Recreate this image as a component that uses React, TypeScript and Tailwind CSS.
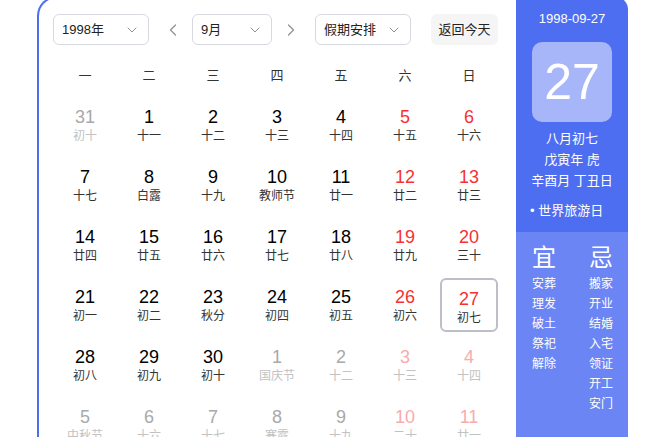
import { ChevronDown, ChevronLeft, ChevronRight } from 'lucide-react'

type Day = { d: number; l: string; out?: boolean }

const rows: Day[][] = [
  [
    { d: 31, l: '初十', out: true },
    { d: 1, l: '十一' },
    { d: 2, l: '十二' },
    { d: 3, l: '十三' },
    { d: 4, l: '十四' },
    { d: 5, l: '十五' },
    { d: 6, l: '十六' },
  ],
  [
    { d: 7, l: '十七' },
    { d: 8, l: '白露' },
    { d: 9, l: '十九' },
    { d: 10, l: '教师节' },
    { d: 11, l: '廿一' },
    { d: 12, l: '廿二' },
    { d: 13, l: '廿三' },
  ],
  [
    { d: 14, l: '廿四' },
    { d: 15, l: '廿五' },
    { d: 16, l: '廿六' },
    { d: 17, l: '廿七' },
    { d: 18, l: '廿八' },
    { d: 19, l: '廿九' },
    { d: 20, l: '三十' },
  ],
  [
    { d: 21, l: '初一' },
    { d: 22, l: '初二' },
    { d: 23, l: '秋分' },
    { d: 24, l: '初四' },
    { d: 25, l: '初五' },
    { d: 26, l: '初六' },
    { d: 27, l: '初七' },
  ],
  [
    { d: 28, l: '初八' },
    { d: 29, l: '初九' },
    { d: 30, l: '初十' },
    { d: 1, l: '国庆节', out: true },
    { d: 2, l: '十二', out: true },
    { d: 3, l: '十三', out: true },
    { d: 4, l: '十四', out: true },
  ],
  [
    { d: 5, l: '中秋节', out: true },
    { d: 6, l: '十六', out: true },
    { d: 7, l: '十七', out: true },
    { d: 8, l: '寒露', out: true },
    { d: 9, l: '十九', out: true },
    { d: 10, l: '二十', out: true },
    { d: 11, l: '廿一', out: true },
  ],
]

const weekdays = ['一', '二', '三', '四', '五', '六', '日']
const yi = ['安葬', '理发', '破土', '祭祀', '解除']
const ji = ['搬家', '开业', '结婚', '入宅', '领证', '开工', '安门']

function Select({ label, w }: { label: string; w: string }) {
  return (
    <div className={`flex h-[31px] items-center justify-between rounded-[6px] border border-[#d7d9e0] pl-[8px] pr-[8px] text-[13px] text-[#222] ${w}`}>
      <span>{label}</span>
      <ChevronDown size={16} strokeWidth={1.5} className="text-[#8e929c]" />
    </div>
  )
}

function Cell({ day, col, today }: { day: Day; col: number; today: boolean }) {
  const weekend = col >= 5
  let num = 'text-[#000]'
  let lunar = 'text-[#333]'
  if (day.out) {
    num = weekend ? 'text-[#f8acac]' : 'text-[#a9a9a9]'
    lunar = 'text-[#c2c2c2]'
  } else if (weekend) {
    num = 'text-[#f73131]'
  }
  return (
    <div className="flex h-[60px] items-center justify-center">
      <div
        className={`flex h-[54px] w-[58px] flex-col items-center pt-[8px] ${
          today ? 'rounded-[6px] border-2 border-[#bcbfca] pt-[6px]' : ''
        }`}
      >
        <span className={`text-[18px] leading-[22px] ${num}`}>{day.d}</span>
        <span className={`text-[12px] leading-[16px] ${lunar}`}>{day.l}</span>
      </div>
    </div>
  )
}

export default function App() {
  return (
    <div className="h-[437px] overflow-hidden bg-white font-['Liberation_Sans','Noto_Sans_CJK_SC',sans-serif]">
      <div className="ml-[37px] mt-[-4px] flex h-[480px] w-[591px] rounded-tl-[20px] rounded-tr-[14px] border-l-2 border-t-2 border-[#4e6ef2]">
        {/* Calendar */}
        <div className="w-[477px] pl-[14px] pt-[16px]">
          <div className="flex items-center">
            <Select label="1998年" w="w-[96px]" />
            <div className="ml-[12px] flex w-[24px] justify-center text-[#8e929c]">
              <ChevronLeft size={20} strokeWidth={1.5} />
            </div>
            <div className="ml-[7px]">
              <Select label="9月" w="w-[80px]" />
            </div>
            <div className="ml-[7px] flex w-[24px] justify-center text-[#8e929c]">
              <ChevronRight size={20} strokeWidth={1.5} />
            </div>
            <div className="ml-[12px]">
              <Select label="假期安排" w="w-[96px]" />
            </div>
            <div className="ml-[20px] flex h-[31px] w-[67px] items-center justify-center rounded-[6px] bg-[#f5f5f6] text-[13px] text-[#222]">
              返回今天
            </div>
          </div>

          <div className="mt-[11px] grid h-[39px] w-[448px] grid-cols-7 items-center text-[13px] text-[#333]">
            {weekdays.map((w) => (
              <div key={w} className="text-center">
                {w}
              </div>
            ))}
          </div>

          <div className="grid w-[448px] grid-cols-7">
            {rows.map((row, r) =>
              row.map((day, c) => (
                <Cell key={`${r}-${c}`} day={day} col={c} today={r === 3 && c === 6} />
              ))
            )}
          </div>
        </div>

        {/* Side panel */}
        <div className="flex w-[112px] flex-col overflow-hidden rounded-tr-[12px] text-white">
          <div className="bg-[#4e6ef2] pb-[11px] pt-[13px]">
            <div className="text-center text-[13px] leading-[16px]">1998-09-27</div>
            <div className="mx-auto mt-[15px] flex h-[80px] w-[80px] items-center justify-center rounded-[10px] bg-[#a7b6f8] text-[50px] font-light leading-none">
              27
            </div>
            <div className="mt-[6px] text-center text-[13px] leading-[21px]">
              <div>八月初七</div>
              <div>戊寅年 虎</div>
              <div>辛酉月 丁丑日</div>
            </div>
            <div className="mt-[9px] pl-[14px] text-[13px] leading-[21px]">• 世界旅游日</div>
          </div>
          <div className="flex flex-1 bg-[#6b85f4] pl-[16px] pt-[12px]">
            <div className="w-[57px]">
              <div className="text-[24px] leading-[28px]">宜</div>
              <div className="mt-[2px] text-[12px] leading-[20px]">
                {yi.map((t) => (
                  <div key={t}>{t}</div>
                ))}
              </div>
            </div>
            <div>
              <div className="text-[24px] leading-[28px]">忌</div>
              <div className="mt-[2px] text-[12px] leading-[20px]">
                {ji.map((t) => (
                  <div key={t}>{t}</div>
                ))}
              </div>
            </div>
          </div>
        </div>
      </div>
    </div>
  )
}
